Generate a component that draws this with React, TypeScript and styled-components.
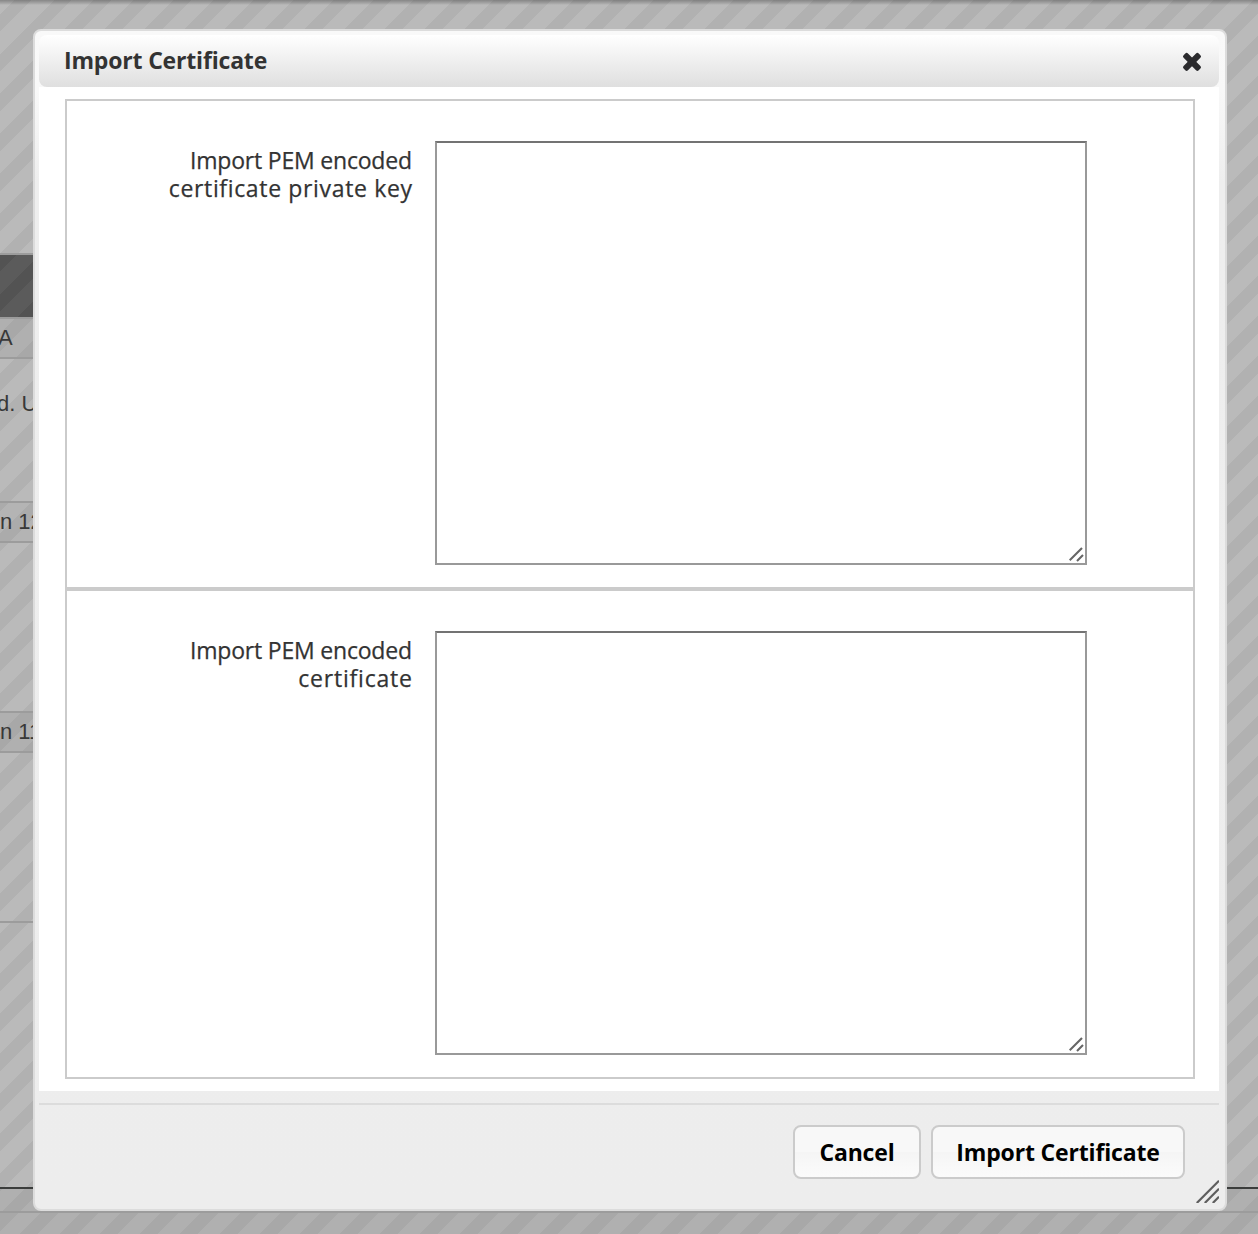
import React from "react";
import styled, { createGlobalStyle } from "styled-components";

const Global = createGlobalStyle`
  * { box-sizing: border-box; }
  body { margin: 0; background: #fff; font-family: "Open Sans", sans-serif; }
`;

const uiFont = `font-family: "Trebuchet MS", "Open Sans", sans-serif; font-variant-ligatures: none;`;

const Page = styled.div`
  position: relative;
  width: 1258px;
  height: 1234px;
  overflow: hidden;
  padding: 29px 31px 0 33px;
  background:
    linear-gradient(rgba(0, 0, 0, 0.28), rgba(0, 0, 0, 0.12) 3px, transparent 5px),
    repeating-linear-gradient(
      135deg,
      #bababa 0 9.9px,
      #b1b1b1 9.9px 22.6px,
      #bababa 22.6px 28.284px
    );
`;

const Behind = styled.div`
  position: absolute;
  inset: 0;
  display: flex;
  flex-direction: column;
  padding-top: 253px;
  font-family: "Liberation Sans", Arial, sans-serif;
  font-size: 22px;
  line-height: 26px;
  color: #383838;
`;

const Row = styled.div<{ $h: number; $bg?: string; $line?: string; $shift?: number; $top?: number; $wide?: boolean }>`
  flex: none;
  height: ${(p) => p.$h}px;
  width: ${(p) => (p.$wide ? "100%" : "600px")};
  background: ${(p) => p.$bg ?? "transparent"};
  border-top: 2px solid ${(p) => p.$line ?? "#9c9c9c"};
  padding-top: ${(p) => p.$top ?? 6}px;
  text-indent: ${(p) => p.$shift ?? 0}px;
  white-space: pre;
`;

const HeadRow = styled(Row)`
  background: repeating-linear-gradient(
    135deg,
    #535353 0 12px,
    #5b5b5b 12px 27.6px,
    #535353 27.6px 28.284px
  );
`;

const Dialog = styled.section`
  position: relative;
  width: 1194px;
  height: 1182px;
  display: flex;
  flex-direction: column;
  padding: 4px 6px 4px 4px;
  border: 2px solid #dcdcdc;
  border-radius: 8px;
  background: linear-gradient(#f9f9f9 0, #f8f8f8 60px, #eeeeee 150px, #ededed 100%);
`;

const TitleBar = styled.header`
  flex: none;
  height: 52px;
  display: flex;
  align-items: center;
  justify-content: space-between;
  padding: 0 16px 0 25px;
  border-radius: 8px;
  background: linear-gradient(#ffffff, #dfdfdf);
`;

const Title = styled.h1`
  ${uiFont}
  margin: 0 0 2px;
  font-size: 23px;
  line-height: 28px;
  font-weight: 700;
  letter-spacing: -0.18px;
  color: #333;
`;

const Body = styled.div`
  flex: none;
  height: 1004px;
  background: #fff;
  padding: 12px 24px 12px 26px;
`;

const Field = styled.div`
  height: 490px;
  display: flex;
  border: 2px solid #cbcbcb;
  padding-top: 40px;
`;

const Label = styled.label`
  ${uiFont}
  display: flex;
  flex-direction: column;
  align-items: flex-end;
  width: 345px;
  margin-right: 23px;
  padding-top: 5px;
  font-size: 23px;
  line-height: 28px;
  color: #333;
  -webkit-text-stroke: 0.25px #333;
`;

const Line = styled.span<{ $track: number }>`
  letter-spacing: ${(p) => p.$track}px;
  margin-right: ${(p) => -p.$track}px;
`;

const Area = styled.div`
  position: relative;
  width: 652px;
  height: 424px;
  border: 2px solid #999;
  border-top-color: #737373;
`;

const Grip = styled.svg<{ $right: number; $bottom: number }>`
  position: absolute;
  right: ${(p) => p.$right}px;
  bottom: ${(p) => p.$bottom}px;
`;

const Footer = styled.footer`
  margin-top: 12px;
  border-top: 2px solid #dcdcdc;
  padding: 20px 34px 0 0;
  display: flex;
  justify-content: flex-end;
  gap: 10px;
`;

const Button = styled.button<{ $w: number }>`
  ${uiFont}
  width: ${(p) => p.$w}px;
  height: 54px;
  padding: 0;
  border: 2px solid #cbcbcb;
  border-radius: 8px;
  background: linear-gradient(#f8f8f8 0 50%, #f5f5f5 51%, #fbfbfb 100%);
  font-size: 23px;
  font-weight: 700;
  letter-spacing: -0.16px;
  color: #000;
`;

const CloseIcon = () => (
  <svg width="22" height="22" viewBox="0 0 22 22" fill="#2b2b2e" aria-label="close">
    <rect x="0.3" y="8.8" width="21.4" height="6.2" rx="1.9" transform="rotate(45 11 11.9)" />
    <rect x="0.3" y="8.8" width="21.4" height="6.2" rx="1.9" transform="rotate(-45 11 11.9)" />
  </svg>
);

const PemField = ({ children }: { children: React.ReactNode }) => (
  <Field>
    <Label>{children}</Label>
    <Area>
      <Grip $right={1} $bottom={1} width="15" height="15" viewBox="0 0 15 15">
        <path d="M0.7 13.3L13 1M8 14L14 8" stroke="#666" strokeWidth="2.1" />
      </Grip>
    </Area>
  </Field>
);

export default function App() {
  return (
    <Page>
      <Global />
      <Behind>
        <HeadRow $h={64} />
        <Row $h={40} $bg="rgba(0,0,0,.05)" $shift={-2}>A</Row>
        <Row $h={144} $shift={-3} $top={32}>d. U</Row>
        <Row $h={40} $bg="rgba(0,0,0,.03)">n 12</Row>
        <Row $h={170} />
        <Row $h={40} $bg="rgba(0,0,0,.05)">n 11</Row>
        <Row $h={170} />
        <Row $h={266} />
        <Row $wide $h={24} $bg="rgba(0,0,0,.05)" $line="#3b3d3c" />
        <Row $wide $h={23} $bg="rgba(0,0,0,.05)" />
      </Behind>
      <Dialog>
        <TitleBar>
          <Title>Import Certificate</Title>
          <CloseIcon />
        </TitleBar>
        <Body>
          <PemField>
            <Line $track={-0.2}>Import PEM encoded</Line>
            <Line $track={0.65}>certificate private key</Line>
          </PemField>
          <PemField>
            <Line $track={-0.2}>Import PEM encoded</Line>
            <Line $track={0.8}>certificate</Line>
          </PemField>
        </Body>
        <Footer>
          <Button $w={128}>Cancel</Button>
          <Button $w={254}>Import Certificate</Button>
        </Footer>
        <Grip $right={6} $bottom={6} width="23" height="23" viewBox="0 0 23 23">
          <path d="M0.8 23L23 0.8M8.8 23L23 8.8M16.8 23L23 16.8" stroke="#5e5e5e" strokeWidth="2.2" />
        </Grip>
      </Dialog>
    </Page>
  );
}
